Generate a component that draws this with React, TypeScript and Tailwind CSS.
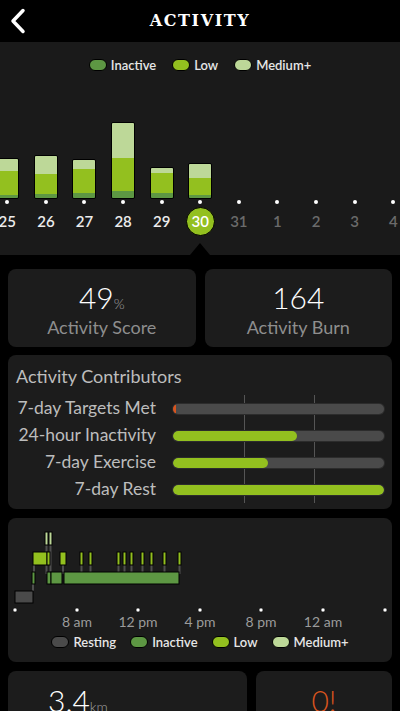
const INACTIVE = '#5d9743';
const LOW = '#93c01f';
const MEDIUM = '#bdd898';
const RESTING = '#4a4a4a';

type Day = { label: string; med: number; low: number; inact: number; past: boolean; selected?: boolean };

const days: Day[] = [
  { label: '25', med: 12, low: 24, inact: 3, past: true },
  { label: '26', med: 18, low: 20, inact: 4, past: true },
  { label: '27', med: 9, low: 24, inact: 5, past: true },
  { label: '28', med: 35, low: 33, inact: 7, past: true },
  { label: '29', med: 5, low: 20, inact: 5, past: true },
  { label: '30', med: 14, low: 17, inact: 3, past: true, selected: true },
  { label: '31', med: 0, low: 0, inact: 0, past: false },
  { label: '1', med: 0, low: 0, inact: 0, past: false },
  { label: '2', med: 0, low: 0, inact: 0, past: false },
  { label: '3', med: 0, low: 0, inact: 0, past: false },
  { label: '4', med: 0, low: 0, inact: 0, past: false },
];

const contributors = [
  { label: '7-day Targets Met', pct: 0 },
  { label: '24-hour Inactivity', pct: 59 },
  { label: '7-day Exercise', pct: 45 },
  { label: '7-day Rest', pct: 100 },
];

const Legend = ({ items, gap }: { items: { label: string; color: string }[]; gap: string }) => (
  <div className={`flex items-center justify-center ${gap}`}>
    {items.map((it) => (
      <div key={it.label} className="flex items-center gap-[4px]">
        <span
          className="block w-[18px] h-[12px] rounded-full border border-black"
          style={{ backgroundColor: it.color }}
        />
        <span className="text-[13px] leading-[18px] text-[#e6e6e6] font-semibold">{it.label}</span>
      </div>
    ))}
  </div>
);

const DayColumn = ({ day }: { day: Day }) => {
  const hasBar = day.med + day.low + day.inact > 0;
  return (
    <div className="w-[38.6px] flex flex-col items-center shrink-0">
      <div className="h-[125px] flex items-end">
        {hasBar && (
          <div className="w-[24px] flex flex-col border border-black rounded-[2px] overflow-hidden">
            <div style={{ height: day.med, backgroundColor: MEDIUM }} />
            <div style={{ height: day.low, backgroundColor: LOW }} />
            <div style={{ height: day.inact, backgroundColor: INACTIVE }} />
          </div>
        )}
      </div>
      <span className="mt-[1px] block w-[4px] h-[4px] rounded-full bg-white" />
      <div
        className={
          day.selected
            ? 'mt-[3px] w-[29px] h-[29px] rounded-full bg-[#93c01f] border border-black flex items-center justify-center text-[15px] font-semibold text-white'
            : day.past
              ? 'mt-[3px] h-[29px] flex items-center text-[15px] font-semibold text-[#ececec]'
              : 'mt-[3px] h-[29px] flex items-center text-[15px] font-semibold text-[#6b6b6b]'
        }
      >
        {day.label}
      </div>
    </div>
  );
};

const lowTicks = [72, 81, 109, 115, 122, 133, 142, 155, 170];
const dots = [7, 69, 130, 192, 253, 315, 377];
const times = [
  { x: 69, t: '8 am' },
  { x: 130, t: '12 pm' },
  { x: 192, t: '4 pm' },
  { x: 253, t: '8 pm' },
  { x: 315, t: '12 am' },
];

const DayTimeline = () => (
  <svg width="384" height="114" viewBox="0 0 384 114" className="block">
    {/* connectors */}
    <g stroke="#4f4f4f" strokeWidth="2">
      <line x1="25" y1="60" x2="25" y2="73" />
      <line x1="26" y1="40" x2="26" y2="56" />
      <line x1="38.5" y1="20" x2="38.5" y2="56" />
      <line x1="42.5" y1="20" x2="42.5" y2="56" />
      <line x1="55" y1="40" x2="55" y2="56" />
      {lowTicks.map((x) => (
        <line key={x} x1={x + 1.5} y1="40" x2={x + 1.5} y2="56" />
      ))}
    </g>
    <g stroke="#000" strokeWidth="1">
      <rect x="7" y="73" width="18" height="12" fill={RESTING} />
      <rect x="24" y="54" width="3" height="12" fill={INACTIVE} />
      <rect x="25" y="34" width="14" height="13" fill={LOW} />
      <rect x="37" y="14" width="3" height="13" fill={MEDIUM} />
      <rect x="41" y="14" width="3" height="13" fill={MEDIUM} />
      <rect x="39" y="34" width="3" height="13" fill={LOW} />
      <rect x="39" y="54" width="4" height="12" fill={INACTIVE} />
      <rect x="43" y="54" width="11" height="12" fill={INACTIVE} />
      <rect x="52" y="34" width="6" height="13" fill={LOW} />
      <rect x="56" y="54" width="115" height="12" fill={INACTIVE} />
      {lowTicks.map((x) => (
        <rect key={x} x={x} y="34" width="3" height="13" fill={LOW} />
      ))}
    </g>
    {dots.map((x) => (
      <circle key={x} cx={x} cy="92" r="2" fill="#fff" stroke="#000" strokeWidth="0.5" />
    ))}
    {times.map((t) => (
      <text
        key={t.t}
        x={t.x}
        y="109"
        textAnchor="middle"
        fill="#9b9b9b"
        fontSize="14"
        fontFamily="Lato, sans-serif"
      >
        {t.t}
      </text>
    ))}
  </svg>
);

export default function App() {
  return (
    <div className="w-[400px] h-[711px] overflow-hidden bg-black text-white" style={{ fontFamily: 'Lato, "Open Sans", sans-serif' }}>
      {/* header */}
      <div className="h-[42px] bg-black flex items-center relative">
        <svg width="36" height="42" viewBox="0 0 36 42" className="block">
          <polyline
            points="23,10.5 13,21 23,31.5"
            fill="none"
            stroke="#fff"
            strokeWidth="3.5"
            strokeLinecap="round"
            strokeLinejoin="round"
          />
        </svg>
        <h1
          className="absolute inset-x-0 text-center text-[16px] font-semibold tracking-[0.1em] text-white pointer-events-none"
          style={{ fontFamily: '"DejaVu Serif", serif' }}
        >
          ACTIVITY
        </h1>
      </div>

      {/* week chart */}
      <div className="relative h-[213px] bg-[#1a1a1a] overflow-hidden">
        <div className="pt-[14px]">
          <Legend
            gap="gap-[16px]"
            items={[
              { label: 'Inactive', color: INACTIVE },
              { label: 'Low', color: LOW },
              { label: 'Medium+', color: MEDIUM },
            ]}
          />
        </div>
        <div className="flex ml-[-12px] w-[425px]">
          {days.map((d) => (
            <DayColumn key={d.label} day={d} />
          ))}
        </div>
        <div className="absolute bottom-0 left-[190px] w-0 h-0 border-l-[10px] border-r-[10px] border-b-[12px] border-l-transparent border-r-transparent border-b-black" />
      </div>

      <div className="px-[8px] pt-[14px] flex flex-col gap-[8px]">
        {/* score cards */}
        <div className="grid grid-cols-2 gap-[9px]">
          <div className="h-[78px] rounded-[8px] bg-[#1c1c1c] flex flex-col items-center pt-[10px]">
            <div className="h-[36px] leading-[36px] font-light text-[30px] text-white">
              49<span className="text-[14px] leading-none text-[#a0a0a0]">%</span>
            </div>
            <div className="text-[18px] leading-[24px] text-[#8e8e8e]">Activity Score</div>
          </div>
          <div className="h-[78px] rounded-[8px] bg-[#1c1c1c] flex flex-col items-center pt-[10px]">
            <div className="h-[36px] leading-[36px] font-light text-[30px] text-white">164</div>
            <div className="text-[18px] leading-[24px] text-[#8e8e8e]">Activity Burn</div>
          </div>
        </div>

        {/* contributors */}
        <div className="h-[154px] rounded-[8px] bg-[#1c1c1c] pt-[10px] pl-[8px] pr-[7px]">
          <div className="text-[18px] leading-[22px] text-[#bdbdbd]">Activity Contributors</div>
          <div className="mt-[8px] flex">
            <div className="w-[140px] flex flex-col">
              {contributors.map((c) => (
                <div key={c.label} className="h-[27px] flex items-center justify-end text-[17.5px] text-[#bdbdbd] whitespace-nowrap">
                  {c.label}
                </div>
              ))}
            </div>
            <div className="relative flex-1 ml-[16px] flex flex-col">
              <div className="absolute top-0 bottom-0 left-[72px] w-px bg-[#555]" />
              <div className="absolute top-0 bottom-0 left-[142px] w-px bg-[#555]" />
              {contributors.map((c) => (
                <div key={c.label} className="h-[27px] flex items-center relative">
                  <div className="w-full h-[12px] rounded-full bg-[#4a4a4a] overflow-hidden border border-black/40">
                    {c.pct > 0 ? (
                      <div className="h-full rounded-full bg-[#93c01f]" style={{ width: `${c.pct}%` }} />
                    ) : (
                      <div className="h-full w-[3px] rounded-full bg-[#d8541e]" />
                    )}
                  </div>
                </div>
              ))}
            </div>
          </div>
        </div>

        {/* day timeline */}
        <div className="h-[144px] rounded-[8px] bg-[#1c1c1c] mt-[1px]">
          <DayTimeline />
          <div className="h-[20px] flex items-center">
            <div className="w-full">
              <Legend
                gap="gap-[14px]"
                items={[
                  { label: 'Resting', color: RESTING },
                  { label: 'Inactive', color: INACTIVE },
                  { label: 'Low', color: LOW },
                  { label: 'Medium+', color: MEDIUM },
                ]}
              />
            </div>
          </div>
        </div>

        {/* bottom cards */}
        <div className="grid grid-cols-[239px_1fr] gap-[9px] mt-[1px]">
          <div className="h-[78px] rounded-[8px] bg-[#1c1c1c] pt-[11px] pl-[40px]">
            <div className="h-[36px] leading-[36px] font-light text-[30px] text-white">
              3.4<span className="text-[14px] leading-none text-[#a0a0a0]">km</span>
            </div>
          </div>
          <div className="h-[78px] rounded-[8px] bg-[#1c1c1c] pt-[11px] text-center">
            <div className="h-[36px] leading-[36px] font-light text-[30px] text-[#d8541e]">0!</div>
          </div>
        </div>
      </div>
    </div>
  );
}
